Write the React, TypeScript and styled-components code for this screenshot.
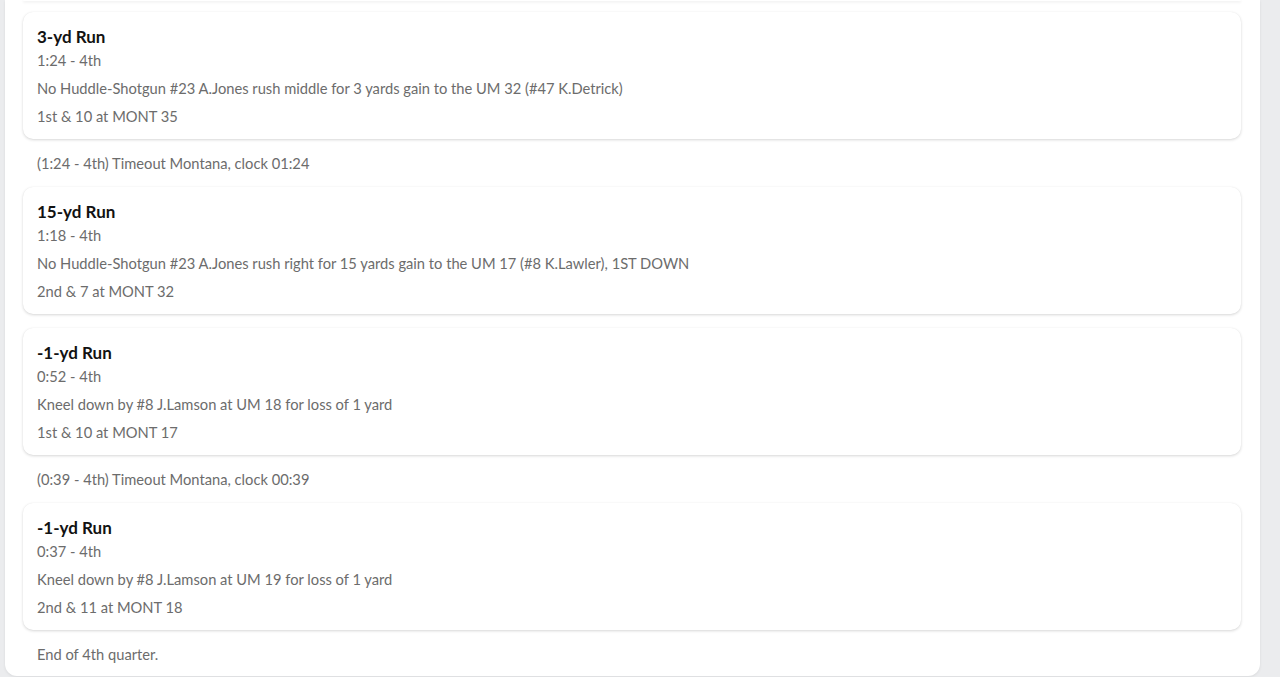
import { FC } from 'react';
import styled, { createGlobalStyle } from 'styled-components';

type Play = {
    kind: 'play';
    title: string;
    clock: string;
    text: string;
    down: string;
};

type Note = {
    kind: 'note';
    text: string;
};

const plays: (Play | Note)[] = [
    {
        kind: 'play',
        title: '3-yd Run',
        clock: '1:24 - 4th',
        text: 'No Huddle-Shotgun #23 A.Jones rush middle for 3 yards gain to the UM 32 (#47 K.Detrick)',
        down: '1st & 10 at MONT 35',
    },
    { kind: 'note', text: '(1:24 - 4th) Timeout Montana, clock 01:24' },
    {
        kind: 'play',
        title: '15-yd Run',
        clock: '1:18 - 4th',
        text: 'No Huddle-Shotgun #23 A.Jones rush right for 15 yards gain to the UM 17 (#8 K.Lawler), 1ST DOWN',
        down: '2nd & 7 at MONT 32',
    },
    {
        kind: 'play',
        title: '-1-yd Run',
        clock: '0:52 - 4th',
        text: 'Kneel down by #8 J.Lamson at UM 18 for loss of 1 yard',
        down: '1st & 10 at MONT 17',
    },
    { kind: 'note', text: '(0:39 - 4th) Timeout Montana, clock 00:39' },
    {
        kind: 'play',
        title: '-1-yd Run',
        clock: '0:37 - 4th',
        text: 'Kneel down by #8 J.Lamson at UM 19 for loss of 1 yard',
        down: '2nd & 11 at MONT 18',
    },
    { kind: 'note', text: 'End of 4th quarter.' },
];

const PlayCard: FC<{ play: Play }> = ({ play }) => (
    <Card>
        <Title>{play.title}</Title>
        <Clock>{play.clock}</Clock>
        <Description>{play.text}</Description>
        <Down>{play.down}</Down>
    </Card>
);

export default function App() {
    return (
        <>
            <GlobalStyle />
            <Page>
                <Panel>
                    <CardTail />
                    <List>
                        {plays.map((p, i) =>
                            p.kind === 'play' ? (
                                <PlayCard key={i} play={p} />
                            ) : (
                                <NoteRow key={i}>{p.text}</NoteRow>
                            )
                        )}
                    </List>
                </Panel>
            </Page>
        </>
    );
}

const GlobalStyle = createGlobalStyle`
    html, body {
        margin: 0;
        padding: 0;
        background: #ebecee;
        font-family: Lato, "Noto Sans", sans-serif;
        -webkit-font-smoothing: antialiased;
    }
`;

const Page = styled.div`
    height: 677px;
    overflow: hidden;
    padding: 0 20px 0 5px;
`;

const Panel = styled.div`
    background: #fff;
    border-radius: 0 0 12px 12px;
    box-shadow: 0 1px 3px rgba(0, 0, 0, 0.08);
    padding: 0 19px 12px 18px;
`;

const CardTail = styled.div`
    height: 1px;
    background: #fff;
    border-radius: 0 0 10px 10px;
    box-shadow: 0 1px 3px rgba(0, 0, 0, 0.14);
`;

const List = styled.div`
    display: flex;
    flex-direction: column;
    gap: 14px;
    padding-top: 11px;
`;

const Card = styled.div`
    background: #fff;
    border-radius: 10px;
    box-shadow: 0 1px 3px rgba(0, 0, 0, 0.16), 0 0 1px rgba(0, 0, 0, 0.06);
    padding: 14px 14px 13px;
    height: 127px;
    box-sizing: border-box;
`;

const Title = styled.div`
    font-size: 17px;
    font-weight: 700;
    color: #121212;
    line-height: 22px;
`;

const Text = styled.div`
    font-size: 14.7px;
    color: #6c6c6c;
`;

const Clock = styled(Text)`
    line-height: 24px;
`;

const Description = styled(Text)`
    line-height: 28px;
    margin-top: 2px;
`;

const Down = styled(Text)`
    line-height: 28px;
`;

const NoteRow = styled(Text)`
    line-height: 20px;
    padding-left: 14px;
`;
